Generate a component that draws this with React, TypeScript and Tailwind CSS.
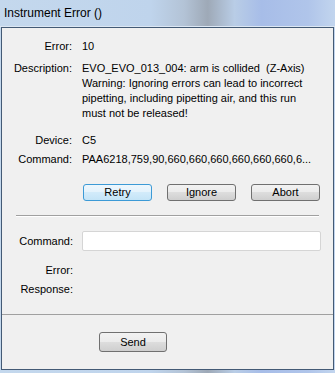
export default function App() {
  const font = { fontFamily: '"Liberation Sans", Arial, sans-serif' }
  return (
    <div
      className="w-[335px] h-[373px] flex flex-col bg-[linear-gradient(to_right,#c4d8ed_0%,#bfd4ec_45%,#b3c3d6_55%,#9ea9b7_62%,#b9cde6_70%,#a7bde8_78%,#b0c5ea_92%,#c2d5ee_100%)] text-[11px] text-black"
      style={font}
    >
      {/* title bar */}
      <div className="h-[27px] shrink-0 flex items-center pl-[4px] text-[12px] border-b border-[#dce7f3]">
        Instrument Error ()
      </div>

      <div className="flex-1 mx-[1px] mb-[3px] bg-[#f0f0f0] border border-[#435a75] flex flex-col">
        {/* error details */}
        <div className="pt-[11px] flex flex-col leading-[15px]">
          <div className="flex">
            <div className="w-[70px] text-right">Error:</div>
            <div className="ml-[10px]">10</div>
          </div>
          <div className="flex mt-[7px]">
            <div className="w-[70px] text-right">Description:</div>
            <div className="ml-[10px] w-[235px]">
              EVO_EVO_013_004: arm is collided&nbsp; (Z-Axis)
              <br />
              Warning: Ignoring errors can lead to incorrect pipetting, including pipetting air, and this run must not be released!
            </div>
          </div>
          <div className="flex mt-[12px]">
            <div className="w-[70px] text-right">Device:</div>
            <div className="ml-[10px]">C5</div>
          </div>
          <div className="flex mt-[4px]">
            <div className="w-[70px] text-right">Command:</div>
            <div className="ml-[10px] w-[240px] whitespace-nowrap overflow-hidden">PAA6218,759,90,660,660,660,660,660,660,6...</div>
          </div>
        </div>

        <div className="flex gap-[15px] mt-[17px] ml-[81px]">
          <button className="w-[69px] h-[17px] rounded-[3px] border border-[#3c9ad6] bg-[linear-gradient(#eef7fd,#e3f2fc_50%,#d2ebfa_50%,#c4e4f7)] text-[11px] leading-none">
            Retry
          </button>
          <button className="w-[69px] h-[17px] rounded-[3px] border border-[#707070] bg-[linear-gradient(#f2f2f2,#ebebeb_50%,#dddddd_50%,#cfcfcf)] text-[11px] leading-none">
            Ignore
          </button>
          <button className="w-[69px] h-[17px] rounded-[3px] border border-[#707070] bg-[linear-gradient(#f2f2f2,#ebebeb_50%,#dddddd_50%,#cfcfcf)] text-[11px] leading-none">
            Abort
          </button>
        </div>

        <div className="mt-[14px] mx-[14px] border-t border-[#a0a0a0] border-b-white border-b h-0" />

        {/* manual command */}
        <div className="flex items-center mt-[14px]">
          <div className="w-[71px] text-right leading-[15px]">Command:</div>
          <div className="ml-[9px] w-[239px] h-[20px] bg-white border border-[#d5d5d5] rounded-[2px]" />
        </div>
        <div className="flex flex-col leading-[15px]">
          <div className="mt-[12px] w-[71px] text-right">Error:</div>
          <div className="mt-[4px] w-[71px] text-right">Response:</div>
        </div>

        <div className="mt-[17px] border-t border-[#a0a0a0] h-0" />

        <div className="mt-[17px] ml-[97px]">
          <button className="w-[68px] h-[20px] rounded-[3px] border border-[#707070] bg-[linear-gradient(#f2f2f2,#ebebeb_50%,#dddddd_50%,#cfcfcf)] text-[11px] leading-none">
            Send
          </button>
        </div>
      </div>
    </div>
  )
}
